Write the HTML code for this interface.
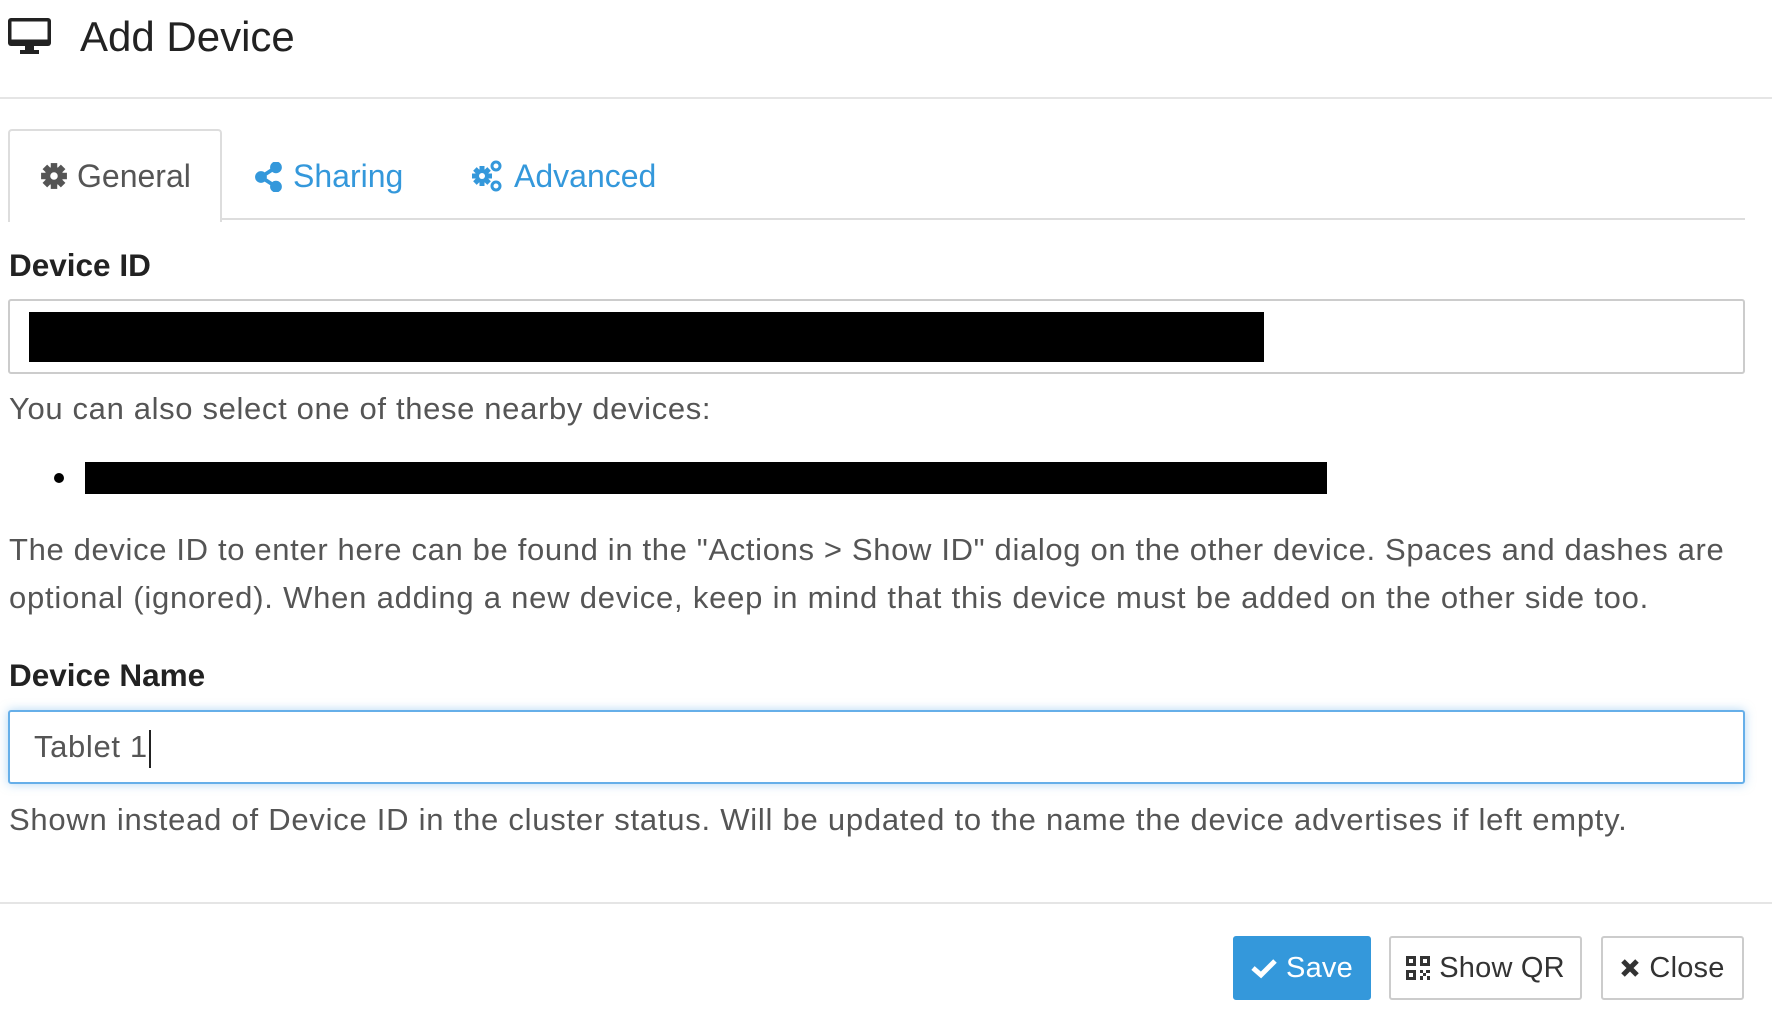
<!DOCTYPE html>
<html><head><meta charset="utf-8"><style>
body{margin:0;width:1772px;height:1031px;background:#fff;font-family:"Liberation Sans",sans-serif;color:#555;position:relative;overflow:hidden}
.a{position:absolute;white-space:nowrap}
.t{font-size:31px;line-height:40px;letter-spacing:0.65px}
.lbl{font-size:31.5px;font-weight:bold;color:#222;line-height:40px}
.btn{position:absolute;top:936px;height:64px;box-sizing:border-box;border:2px solid #ccc;border-radius:3px;font-size:29px;color:#333;display:flex;align-items:center;justify-content:center;gap:9px;letter-spacing:0.2px}
</style></head><body>
<svg class="a" style="left:8px;top:18px" width="43" height="37" viewBox="0 0 43 37"><rect x="0" y="0" width="43" height="28" rx="3" fill="#222"/><rect x="3.5" y="3.5" width="36" height="18" fill="#fff"/><rect x="17" y="28" width="9" height="5" fill="#222"/><rect x="12" y="32" width="19" height="4" fill="#222"/></svg>
<div class="a" style="left:80px;top:13px;font-size:42px;line-height:48px;color:#222">Add Device</div>
<div class="a" style="left:0;top:97px;width:1772px;height:2px;background:#e5e5e5"></div>
<div class="a" style="left:219px;top:218px;width:1526px;height:2px;background:#ddd"></div>
<div class="a" style="left:8px;top:129px;width:210px;height:91px;border:2px solid #ddd;border-bottom:none;border-radius:4px 4px 0 0;background:#fff"></div>
<svg class="a" style="left:40px;top:162px" width="28" height="28" viewBox="-13 -13 26 26"><g fill="#555"><circle r="8.5"/><rect x="-3" y="-12" width="6" height="24"/><rect x="-3" y="-12" width="6" height="24" transform="rotate(45)"/><rect x="-3" y="-12" width="6" height="24" transform="rotate(90)"/><rect x="-3" y="-12" width="6" height="24" transform="rotate(135)"/></g><circle r="3.5" fill="#fff"/></svg>
<div class="a" style="left:77px;top:156px;font-size:32px;line-height:40px;color:#555">General</div>
<svg class="a" style="left:255px;top:162px" width="28" height="30" viewBox="0 0 25 28"><g fill="#3498db" stroke="#3498db"><circle cx="19" cy="5" r="5"/><circle cx="5" cy="14" r="5"/><circle cx="19" cy="23" r="5"/><line x1="5" y1="14" x2="19" y2="5" stroke-width="3.5"/><line x1="5" y1="14" x2="19" y2="23" stroke-width="3.5"/></g></svg>
<div class="a" style="left:293px;top:156px;font-size:32px;line-height:40px;color:#3498db">Sharing</div>
<svg class="a" style="left:470px;top:160px" width="34" height="32" viewBox="0 0 30 32"><g fill="#3498db"><g transform="translate(10,16)"><circle r="7"/><rect x="-2.5" y="-10" width="5" height="20"/><rect x="-2.5" y="-10" width="5" height="20" transform="rotate(45)"/><rect x="-2.5" y="-10" width="5" height="20" transform="rotate(90)"/><rect x="-2.5" y="-10" width="5" height="20" transform="rotate(135)"/></g><g transform="translate(24,6)"><circle r="4" fill="none" stroke="#3498db" stroke-width="3"/></g><g transform="translate(24,26)"><circle r="4" fill="none" stroke="#3498db" stroke-width="3"/></g></g><circle cx="10" cy="16" r="3" fill="#fff"/></svg>
<div class="a" style="left:514px;top:156px;font-size:32px;line-height:40px;color:#3498db">Advanced</div>
<div class="a lbl" style="left:9px;top:245px">Device ID</div>
<div class="a" style="left:8px;top:299px;width:1737px;height:75px;box-sizing:border-box;border:2px solid #ccc;border-radius:3px"></div>
<div class="a" style="left:29px;top:312px;width:1235px;height:50px;background:#000"></div>
<div class="a t" style="left:9px;top:389px">You can also select one of these nearby devices:</div>
<div class="a" style="left:54px;top:473px;width:10px;height:10px;border-radius:50%;background:#000"></div>
<div class="a" style="left:85px;top:462px;width:1242px;height:32px;background:#000"></div>
<div class="a t" style="left:9px;top:530px">The device ID to enter here can be found in the "Actions &gt; Show ID" dialog on the other device. Spaces and dashes are</div>
<div class="a t" style="left:9px;top:578px;letter-spacing:0.78px">optional (ignored). When adding a new device, keep in mind that this device must be added on the other side too.</div>
<div class="a lbl" style="left:9px;top:655px">Device Name</div>
<div class="a" style="left:8px;top:710px;width:1737px;height:74px;box-sizing:border-box;border:2px solid #66afe9;border-radius:3px;box-shadow:0 0 10px rgba(102,175,233,.5)"></div>
<div class="a t" style="left:34px;top:727px;color:#555">Tablet 1<span style="display:inline-block;width:2px;height:38px;background:#222;vertical-align:middle;margin-left:1px"></span></div>
<div class="a t" style="left:9px;top:800px;letter-spacing:0.75px">Shown instead of Device ID in the cluster status. Will be updated to the name the device advertises if left empty.</div>
<div class="a" style="left:0;top:902px;width:1772px;height:2px;background:#e5e5e5"></div>
<div class="btn" style="left:1233px;width:138px;background:#3498db;border-color:#3498db;color:#fff"><svg width="26" height="22" viewBox="0 0 26 22"><path d="M2 11 L10 18 L24 4" stroke="#fff" stroke-width="5" fill="none"/></svg>Save</div>
<div class="btn" style="left:1389px;width:193px"><svg width="24" height="24" viewBox="0 0 24 24" fill="#333"><path d="M0 0h10v10H0zM3 3v4h4V3zM14 0h10v10H14zM17 3v4h4V3zM0 14h10v10H0zM3 17v4h4v-4zM14 14h3v3h-3zM20 14h4v3h-4zM17 17h3v3h-3zM14 20h3v4h-3zM21 20h3v4h-3z"/></svg>Show QR</div>
<div class="btn" style="left:1601px;width:143px"><svg width="20" height="20" viewBox="0 0 20 20"><path d="M3 3L17 17M17 3L3 17" stroke="#333" stroke-width="5"/></svg>Close</div>
</body></html>
